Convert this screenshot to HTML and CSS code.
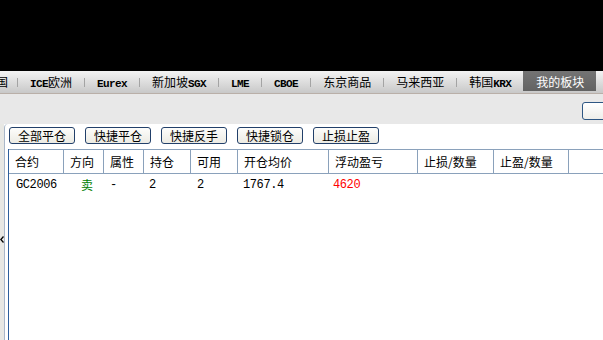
FILE: index.html
```html
<!DOCTYPE html>
<html lang="zh-CN">

<head>
    <meta charset="UTF-8">
    <title>持仓</title>
    <link rel="stylesheet" href="styles.css">
</head>

<body>
    <div class="topbar"></div>

    <div class="tabs">
        <span class="tab first">美国</span><i class="sep"></i>
        <span class="tab"><b class="en">ICE</b>欧洲</span><i class="sep"></i>
        <span class="tab"><b class="en">Eurex</b></span><i class="sep"></i>
        <span class="tab">新加坡<b class="en">SGX</b></span><i class="sep"></i>
        <span class="tab"><b class="en">LME</b></span><i class="sep"></i>
        <span class="tab"><b class="en">CBOE</b></span><i class="sep"></i>
        <span class="tab">东京商品</span><i class="sep"></i>
        <span class="tab">马来西亚</span><i class="sep"></i>
        <span class="tab">韩国<b class="en">KRX</b></span>
        <span class="tab active">我的板块</span>
    </div>

    <div class="toolbar">
        <button class="tool-btn"></button>
    </div>

    <div class="main">
        <div class="side">
            <svg class="arrow" width="4" height="7" viewBox="0 0 4 7">
                <path d="M3.5 0.5 L0.8 3.5 L3.5 6.5" fill="none" stroke="#000" stroke-width="1.3" />
            </svg>
        </div>
        <div class="panel">
            <div class="actions">
                <button class="btn">全部平仓</button>
                <button class="btn">快捷平仓</button>
                <button class="btn">快捷反手</button>
                <button class="btn">快捷锁仓</button>
                <button class="btn">止损止盈</button>
            </div>
            <div class="grid">
                <div class="row head">
                    <div class="cell">合约</div>
                    <div class="cell">方向</div>
                    <div class="cell">属性</div>
                    <div class="cell">持仓</div>
                    <div class="cell">可用</div>
                    <div class="cell">开仓均价</div>
                    <div class="cell">浮动盈亏</div>
                    <div class="cell">止损/数量</div>
                    <div class="cell">止盈/数量</div>
                    <div class="cell last"></div>
                </div>
                <div class="row data">
                    <div class="cell num c-code">GC2006</div>
                    <div class="cell sell">卖</div>
                    <div class="cell num">-</div>
                    <div class="cell num c-num">2</div>
                    <div class="cell num">2</div>
                    <div class="cell num c-num">1767.4</div>
                    <div class="cell num c-pnl">4620</div>
                    <div class="cell"></div>
                    <div class="cell"></div>
                    <div class="cell last"></div>
                </div>
            </div>
        </div>
    </div>
</body>

</html>
```

FILE: styles.css
```css
*,
*::after,
*::before {
    box-sizing: border-box;
}

html,
body {
    margin: 0;
    height: 100%;
    overflow: hidden;
}

body {
    font-family: "Noto Sans CJK SC", "DejaVu Sans", sans-serif;
    font-size: 12px;
    color: #000;
    background: #fff;
    display: flex;
    flex-direction: column;
}

.en {
    font-family: "Liberation Mono", monospace;
    font-size: 11px;
    letter-spacing: -0.6px;
}

b.en {
    font-weight: bold;
}

.num {
    font-family: "Liberation Mono", "Noto Sans CJK SC", monospace;
    font-size: 12px;
    letter-spacing: -0.4px;
}

.topbar {
    height: 71px;
    background: #000;
    flex: none;
}

/* market tabs */
.tabs {
    height: 23px;
    flex: none;
    display: flex;
    align-items: flex-start;
    background: linear-gradient(#f3f3f3, #c8c8c8);
    border-bottom: 1px solid #b9afa8;
    white-space: nowrap;
}

.tab {
    height: 20px;
    line-height: 21px;
    padding: 0 12px;
    flex: none;
}

.tab.first {
    margin-left: -28px;
    padding-right: 9px;
}

.tab.active {
    width: 73px;
    padding: 0 13px;
    background: linear-gradient(#747474, #626262);
    color: #fff;
}

.sep {
    width: 1px;
    height: 9px;
    margin-top: 7px;
    background: #a4a4a4;
    flex: none;
}

.toolbar {
    height: 30px;
    flex: none;
    background: #e8e8e8;
    padding-top: 8px;
    display: flex;
}

.tool-btn {
    margin-left: 582px;
    width: 40px;
    height: 18px;
    flex: none;
    border: 1px solid #2d5683;
    border-radius: 3px;
    background: linear-gradient(#ffffff, #eeeeea);
}

/* positions */
.main {
    flex: 1;
    display: flex;
}

.side {
    width: 4px;
    background: #e8e8e4;
    flex: none;
    padding-top: 112px;
}

.arrow {
    display: block;
}

.panel {
    flex: 1;
    display: flex;
    flex-direction: column;
    border-left: 1px solid #a9b7c9;
    border-top-left-radius: 4px;
    padding: 3px 0 0 3px;
    background: #fff;
}

.actions {
    display: flex;
    gap: 10px;
    margin-left: 1px;
}

.btn {
    width: 66px;
    height: 17px;
    padding: 0;
    font: inherit;
    line-height: 15px;
    color: #000;
    border: 1px solid #22406a;
    border-radius: 3px;
    background: linear-gradient(#fdfdfb, #ecebe4);
}

.grid {
    flex: 1;
    margin-top: 5px;
    border-left: 1px solid #2e5f9c;
}

.row {
    display: grid;
    grid-template-columns: 55px 40px 40px 47px 47px 91px 89px 76px 75px 1fr;
}

.row.head {
    border-top: 1px solid #8aa1bb;
    border-bottom: 1px solid #8aa1bb;
}

.head .cell {
    height: 23px;
    line-height: 23px;
    padding-left: 6px;
    border-right: 1px solid #8aa1bb;
}

.head .cell.last {
    border-right: none;
}

.data .cell {
    height: 22px;
    line-height: 22px;
    padding-left: 6px;
}

.data .c-code {
    padding-left: 7px;
}

.data .c-num {
    padding-left: 5px;
}

.data .sell {
    padding-left: 17px;
    color: #008000;
}

.data .c-pnl {
    padding-left: 4px;
    color: #ff0000;
}
```
